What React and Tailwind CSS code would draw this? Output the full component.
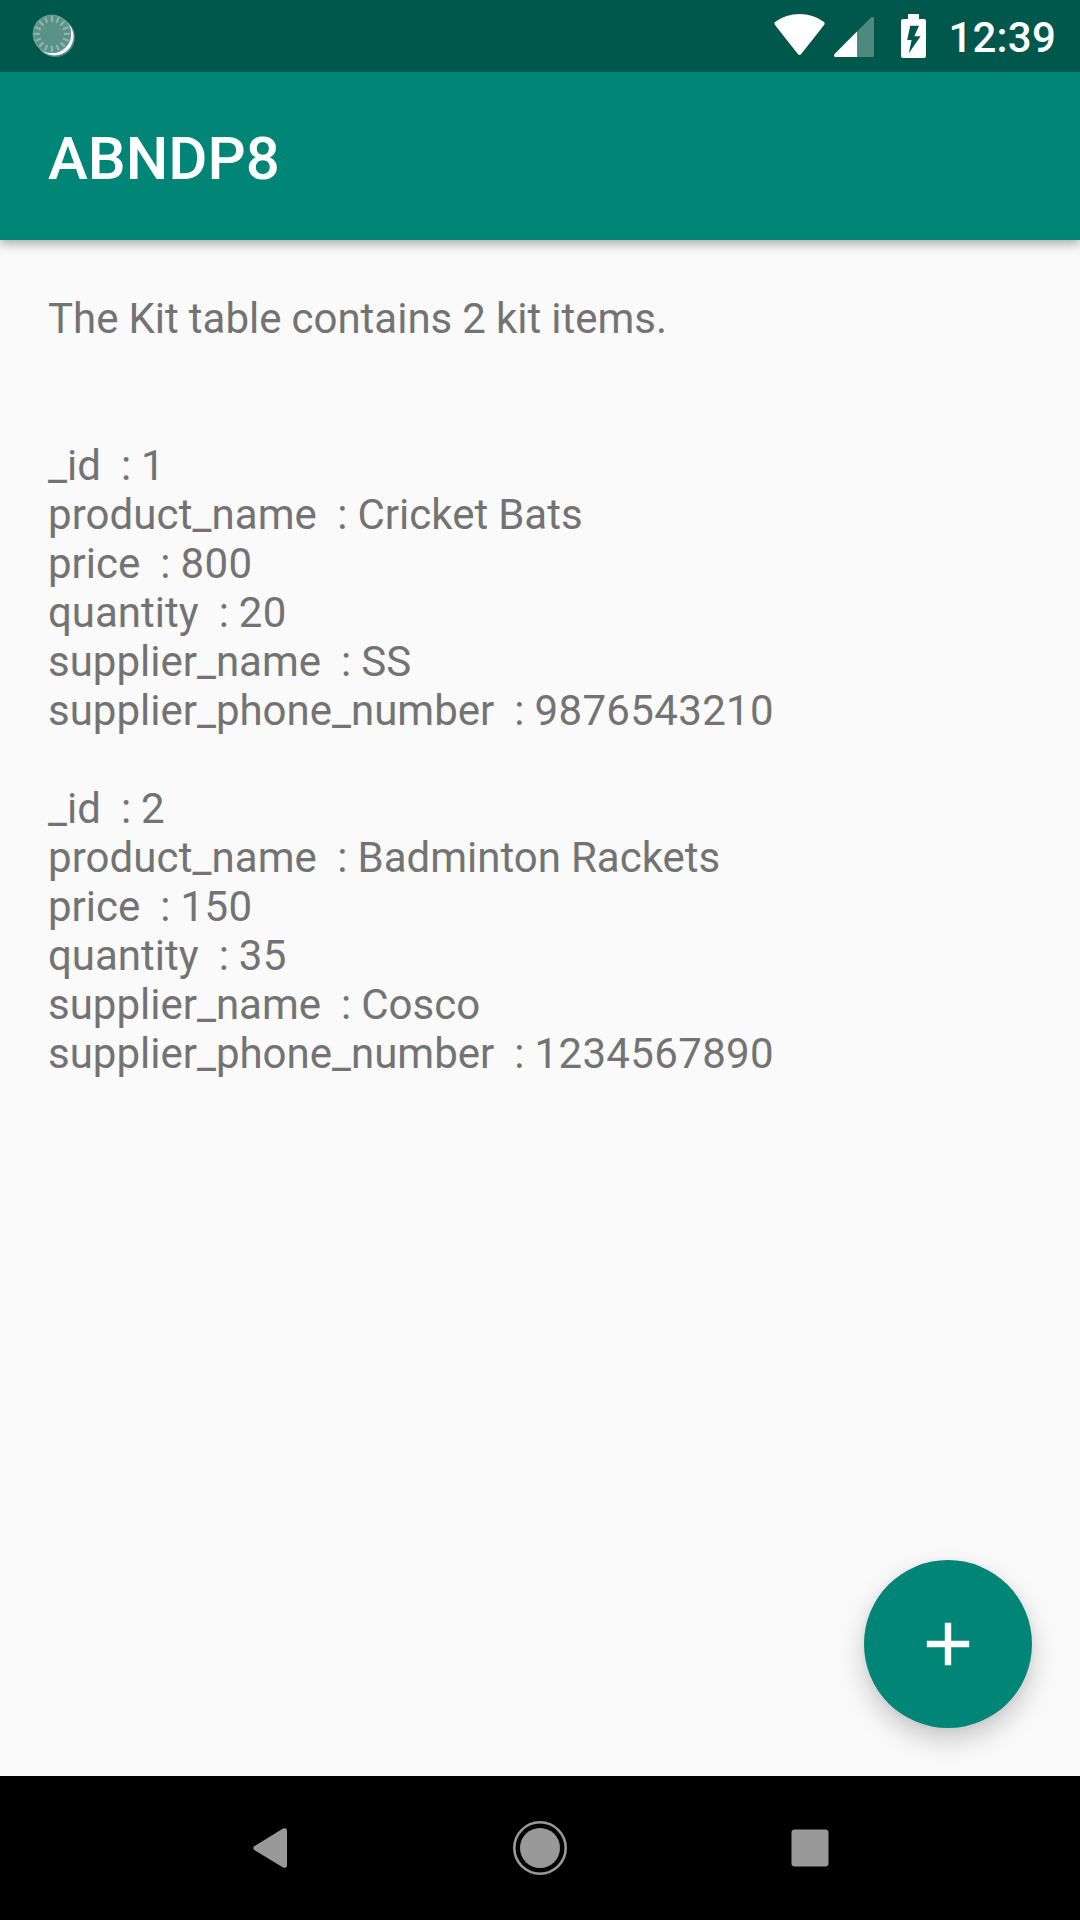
const KITS = [
  [
    ["_id", "1"],
    ["product_name", "Cricket Bats"],
    ["price", "800"],
    ["quantity", "20"],
    ["supplier_name", "SS"],
    ["supplier_phone_number", "9876543210"],
  ],
  [
    ["_id", "2"],
    ["product_name", "Badminton Rackets"],
    ["price", "150"],
    ["quantity", "35"],
    ["supplier_name", "Cosco"],
    ["supplier_phone_number", "1234567890"],
  ],
];

const TICKS = Array.from({ length: 16 }, (_, i) => i * 22.5);

// Digits are set slightly wider than the surrounding letters.
function KitField({ name, value }) {
  return (
    <div className="flex whitespace-pre">
      <span className={name === "product_name" ? "tracking-[0.08px]" : ""}>{`${name}  : `}</span>
      <span className={/^\d+$/.test(value) ? "tracking-[0.35px]" : ""}>{value}</span>
    </div>
  );
}

function SyncIcon() {
  return (
    <svg width="48" height="48" viewBox="0 0 48 48">
      <circle cx="27.2" cy="28.2" r="19.8" fill="#fff" opacity=".3" />
      <circle cx="26.6" cy="27.6" r="18.9" fill="#fff" />
      <circle cx="23.9" cy="24.9" r="19.2" fill="#5a9188" />
      <circle cx="23.9" cy="24.9" r="18.5" fill="none" stroke="#6b9c94" strokeWidth="1.4" />
      {TICKS.map((a) => (
        <rect key={a} x="22.8" y="7" width="2.2" height="6" rx=".6" fill="#8fb5af" transform={`rotate(${a} 23.9 24.9)`} />
      ))}
    </svg>
  );
}

function WifiIcon() {
  return (
    <svg width="52" height="42" viewBox="0 0 52 42">
      <path d="M1 10.9Q-.4 9 1.4 7.7Q12 .1 25.5 .1T49.7 7.7Q51.4 9 50.1 10.9L27.4 39.8Q25.5 42.4 23.6 39.8Z" fill="#fff" />
    </svg>
  );
}

function SignalIcon() {
  return (
    <svg width="40" height="40" viewBox="0 0 40 40">
      <path d="M23 14.4L36.9.5Q38-.3 39 .1Q40 .6 40 2V38.5Q40 40 38.5 40H23Z" fill="#4d897f" />
      <path d="M23 14.4V40H1.6Q.3 40 .05 38.9Q-.1 37.8.8 36.8Z" fill="#fff" />
    </svg>
  );
}

function BatteryIcon() {
  return (
    <svg width="25" height="44" viewBox="0 0 25 44">
      <path d="M7 0H18V5H23Q25 5 25 7V42Q25 44 23 44H2Q0 44 0 42V7Q0 5 2 5H7Z" fill="#fff" />
      <path d="M9.2 11.7H18L13.3 22.2H19.6L7.8 39.3L10.6 26.1H6.2Z" fill="#00574b" />
    </svg>
  );
}

export default function App() {
  return (
    <div className="flex h-[1920px] w-[1080px] flex-col overflow-hidden bg-[#fafafa] font-['Roboto',sans-serif]">
      <header className="z-20 flex h-[72px] shrink-0 items-start justify-between bg-[#00574b] pr-[24px] pl-[28px]">
        <div className="pt-[9px]">
          <SyncIcon />
        </div>
        <div className="flex items-start text-white">
          <div className="mr-[8px] pt-[14px]">
            <WifiIcon />
          </div>
          <div className="mr-[27px] pt-[17px]">
            <SignalIcon />
          </div>
          <div className="mr-[22px] pt-[14px]">
            <BatteryIcon />
          </div>
          <span className="pt-[13px] text-[42px] leading-[49px] font-medium tracking-[0.2px]">12:39</span>
        </div>
      </header>

      <div className="z-10 flex h-[168px] shrink-0 items-center bg-[#008577] px-[48px] pt-[6px] shadow-[0_4px_10px_rgba(0,0,0,0.32)]">
        <h1 className="text-[60px] leading-[70px] font-medium text-white">ABNDP8</h1>
      </div>

      <main className="relative flex-1 px-[48px] pt-[54px]">
        <div className="text-[42px] leading-[49px] [word-spacing:-0.4px] text-[#737373]">
          <p className="mb-[98px]">The Kit table contains 2 kit items.</p>
          <div className="flex flex-col gap-[49px]">
            {KITS.map((fields) => (
              <div key={fields[0][1]}>
                {fields.map(([name, value]) => (
                  <KitField key={name} name={name} value={value} />
                ))}
              </div>
            ))}
          </div>
        </div>
        <button
          aria-label="Add kit item"
          className="absolute right-[48px] bottom-[48px] flex size-[168px] items-center justify-center rounded-full bg-[#008577] shadow-[0_12px_28px_rgba(0,0,0,0.2),0_2px_8px_rgba(0,0,0,0.05)]"
        >
          <svg width="48" height="48" viewBox="0 0 48 48">
            <path d="M24 2.8V45.2M2.8 24H45.2" stroke="#fff" strokeWidth="6.4" />
          </svg>
        </button>
      </main>

      <nav className="flex h-[144px] shrink-0 justify-center bg-black">
        <div className="grid w-[810px] grid-cols-3 place-items-center">
          <svg width="34" height="40" viewBox="0 0 34 40">
            <path d="M1.3 18.2L30 .5Q34-.8 34 3.2V36.8Q34 40.8 30 39.5L1.3 22Q-.8 20 1.3 18.2Z" fill="#999" />
          </svg>
          <svg width="54" height="54" viewBox="0 0 54 54">
            <circle cx="27" cy="27" r="25.7" fill="none" stroke="#999" strokeWidth="2.6" />
            <circle cx="27" cy="27" r="20" fill="#999" />
          </svg>
          <svg width="38" height="38" viewBox="0 0 38 38">
            <rect x=".5" y=".5" width="37" height="37" rx="3" fill="#999" />
          </svg>
        </div>
      </nav>
    </div>
  );
}
